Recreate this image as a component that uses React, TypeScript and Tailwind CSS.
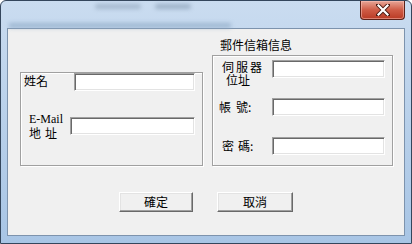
import React from "react";

const cjk = "font-['Noto_Sans_CJK_TC','Noto_Sans_CJK_SC',sans-serif]";

const Field = ({ w }: { w: string }) => (
  <div
    className={`h-[18px] shrink-0 ${w} border border-t-[#a0a0a0] border-l-[#a0a0a0] border-b-white border-r-white bg-white shadow-[inset_1px_1px_0_#696969,inset_-1px_-1px_0_#e3e3e3]`}
  />
);

const WinButton = ({ label, w }: { label: string; w: string }) => (
  <button
    className={`flex h-[20px] ${w} items-center justify-center border border-t-white border-l-white border-b-[#696969] border-r-[#696969] bg-[#f0f0f0] text-[12px] leading-none text-black shadow-[inset_-1px_-1px_0_#a0a0a0,inset_1px_1px_0_#e3e3e3]`}
  >
    {label}
  </button>
);

export default function App() {
  return (
    <div className={`h-[244px] w-[412px] overflow-hidden bg-white ${cjk}`}>
      <div className="flex h-full flex-col rounded-t-[6px] border border-[#34465c] bg-gradient-to-b from-[#cadcf0] via-[#b8d0ea] to-[#a8c5e5]">
        {/* title bar */}
        <div className="flex h-[27px] shrink-0 items-start">
          <div className="flex flex-1 flex-col pt-[3px]">
            <div className="flex gap-[14px] pl-[94px]">
              <div className="h-[5px] w-[46px] rounded-full bg-[#8da2b8] opacity-60 blur-[2px]" />
              <div className="h-[5px] w-[36px] rounded-full bg-[#7f95ac] opacity-60 blur-[2px]" />
            </div>
            <div className="ml-[8px] mt-[14px] h-[5px] w-[222px] bg-[#8ea9c5] opacity-70 blur-[2px]" />
          </div>
          <div className="mr-[6px] flex h-[19px] w-[45px] items-center justify-center rounded-b-[4px] border border-t-0 border-[#5c2219] bg-gradient-to-b from-[#e6a597] via-[#cf5b45] to-[#b93a24] shadow-[inset_0_0_0_1px_rgba(255,200,190,0.5)]">
            <svg width="14" height="12" viewBox="0 0 14 12">
              <path d="M2 1 L12 11 M12 1 L2 11" stroke="#4a1a12" strokeWidth="4" strokeLinecap="square" />
              <path d="M2.5 1.5 L11.5 10.5 M11.5 1.5 L2.5 10.5" stroke="#ffffff" strokeWidth="2.2" strokeLinecap="square" />
            </svg>
          </div>
        </div>

        {/* client area */}
        <div className="mx-[6px] mb-[7px] flex flex-1 flex-col border border-[#7d93ad] bg-[#f0f0f0] text-[12px] text-black">
          <div className="flex items-end pl-[12px] pt-[9px]">
            {/* left group */}
            <div className="flex h-[94px] w-[183px] flex-col border border-[#a0a0a0] pr-[7px] shadow-[inset_1px_1px_0_#fff,1px_1px_0_#fff]">
              <div className="flex h-[18px] items-start">
                <span className="mt-[1px] w-[53px] pl-[3px] leading-[14px]">姓名</span>
                <Field w="w-[121px]" />
              </div>
              <div className="mt-[22px] flex items-center">
                <div className="flex w-[49px] flex-col pl-[8px] leading-[13px]">
                  <span className="font-['Liberation_Serif',serif] text-[12px]">E-Mail</span>
                  <span>
                    地<span className="ml-[4px]">址</span>
                  </span>
                </div>
                <Field w="w-[125px]" />
              </div>
            </div>

            {/* right group */}
            <div className="ml-[9px] flex w-[181px] flex-col">
              <span className="pl-[8px] leading-[14px]">郵件信箱信息</span>
              <div className="mt-[3px] flex h-[111px] flex-col border border-[#a0a0a0] pt-[4px] shadow-[inset_1px_1px_0_#fff,1px_1px_0_#fff]">
                <div className="flex h-[18px] items-start">
                  <div className="flex w-[59px] flex-col pl-[9px] leading-[13px]">
                    <span className="tracking-[2px]">伺服器</span>
                    <span className="ml-[4px]">位址</span>
                  </div>
                  <Field w="w-[113px]" />
                </div>
                <div className="mt-[20px] flex h-[18px] items-center">
                  <span className="w-[59px] pl-[6px] leading-[18px]">
                    帳<span className="ml-[5px]">號:</span>
                  </span>
                  <Field w="w-[113px]" />
                </div>
                <div className="mt-[21px] flex h-[18px] items-center">
                  <span className="w-[59px] pl-[9px] leading-[14px]">
                    密<span className="ml-[4px]">碼:</span>
                  </span>
                  <Field w="w-[113px]" />
                </div>
              </div>
            </div>
          </div>

          {/* buttons */}
          <div className="mt-[26px] flex gap-[24px] pl-[111px]">
            <WinButton label="確定" w="w-[74px]" />
            <WinButton label="取消" w="w-[76px]" />
          </div>
        </div>
      </div>
    </div>
  );
}
